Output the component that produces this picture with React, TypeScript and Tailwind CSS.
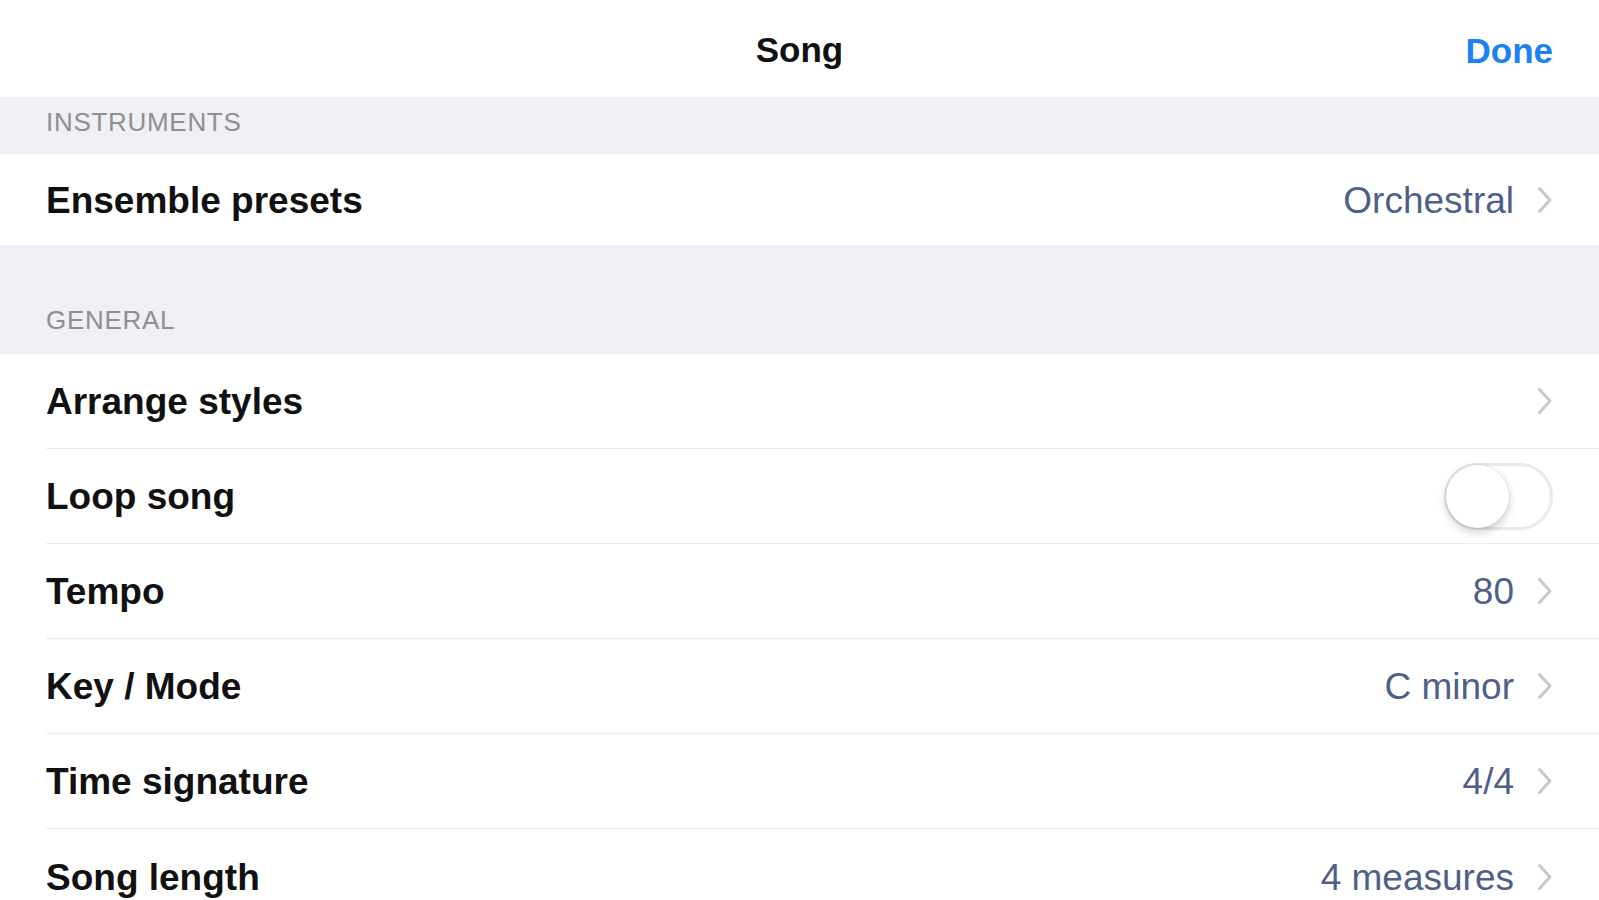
import { useState } from "react";

type Row = {
  label: string;
  value?: string;
  toggle?: boolean;
  chevron?: boolean;
};

const generalRows: Row[] = [
  { label: "Arrange styles", chevron: true },
  { label: "Loop song", toggle: true },
  { label: "Tempo", value: "80", chevron: true },
  { label: "Key / Mode", value: "C minor", chevron: true },
  { label: "Time signature", value: "4/4", chevron: true },
  { label: "Song length", value: "4 measures", chevron: true },
];

const Chevron = () => (
  <svg width="16" height="28" viewBox="0 0 16 28" className="shrink-0">
    <path
      d="M2.5 2.5 L13 14 L2.5 25.5"
      fill="none"
      stroke="#c7c7cc"
      strokeWidth="3"
      strokeLinecap="round"
      strokeLinejoin="round"
    />
  </svg>
);

const Toggle = ({ on, onChange }: { on: boolean; onChange: () => void }) => (
  <button
    onClick={onChange}
    className={`relative h-[67px] w-[109px] rounded-full border-[3px] ${
      on ? "border-[#34c759] bg-[#34c759]" : "border-[#e9e9eb] bg-white"
    }`}
  >
    <span
      className={`absolute top-[-1px] h-[63px] w-[63px] rounded-full bg-white shadow-[0_4px_10px_rgba(0,0,0,0.2),0_0_0_1px_rgba(0,0,0,0.05)] ${
        on ? "left-[41px]" : "left-[-1px]"
      }`}
    />
  </button>
);

const SectionHeader = ({ title, tall }: { title: string; tall?: boolean }) => (
  <div
    className={`flex items-end px-[46px] bg-[#efeff4] ${
      tall ? "h-[109px] pb-[19px]" : "h-[57px] pb-[17px]"
    }`}
  >
    <span className="text-[26px] leading-[30px] tracking-[0.7px] text-[#8e8e93]">
      {title}
    </span>
  </div>
);

const SettingRow = ({
  row,
  last,
  height,
  loop,
  setLoop,
}: {
  row: Row;
  last?: boolean;
  height: string;
  loop: boolean;
  setLoop: (v: boolean) => void;
}) => (
  <div className="bg-white pl-[46px]">
    <div
      className={`flex items-center justify-between pr-[46px] ${height} ${
        last ? "" : "border-b border-[#ebebee]"
      }`}
    >
      <span className="pt-[2px] text-[37px] font-bold text-[#111111]">
        {row.label}
      </span>
      <div className="flex items-center gap-[23px]">
        {row.value && (
          <span className="pt-[2px] text-[37px] text-[#4f5f88]">{row.value}</span>
        )}
        {row.toggle && <Toggle on={loop} onChange={() => setLoop(!loop)} />}
        {row.chevron && <Chevron />}
      </div>
    </div>
  </div>
);

export default function App() {
  const [loop, setLoop] = useState(false);

  return (
    <div className="h-[900px] w-full overflow-hidden bg-white font-['Liberation_Sans',Arial,sans-serif]">
      {/* Nav bar */}
      <div className="relative flex h-[97px] items-center justify-center bg-white pt-[4px]">
        <span className="text-[35px] font-bold text-[#111111]">Song</span>
        <button className="absolute right-[46px] top-1/2 -translate-y-[46%] text-[35px] font-bold text-[#1a82f2]">
          Done
        </button>
      </div>

      <SectionHeader title="INSTRUMENTS" />
      <SettingRow
        row={{ label: "Ensemble presets", value: "Orchestral", chevron: true }}
        last
        height="h-[91px]"
        loop={loop}
        setLoop={setLoop}
      />

      <SectionHeader title="GENERAL" tall />
      {generalRows.map((row, i) => (
        <SettingRow
          key={row.label}
          row={row}
          last={i === generalRows.length - 1}
          height="h-[95px]"
          loop={loop}
          setLoop={setLoop}
        />
      ))}
    </div>
  );
}
